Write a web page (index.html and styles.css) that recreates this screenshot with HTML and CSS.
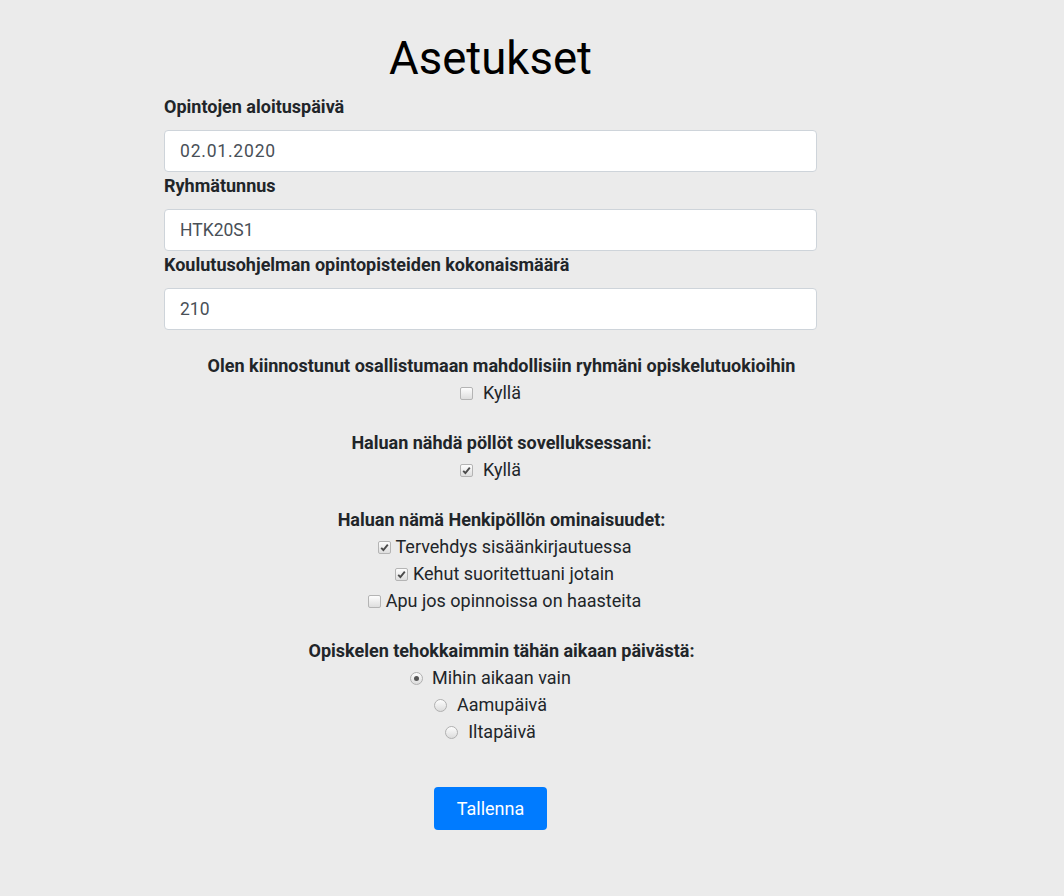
FILE: index.html
```html
<!DOCTYPE html>
<html lang="fi">
<head>
<meta charset="utf-8">
<title>Asetukset</title>
<link rel="stylesheet" href="styles.css">
</head>
<body>
<main class="page">
  <h1 class="title">Asetukset</h1>
  <form class="form">
    <label class="field-label" for="start">Opintojen aloituspäivä</label>
    <input class="field date" id="start" type="text" value="02.01.2020">
    <label class="field-label" for="group">Ryhmätunnus</label>
    <input class="field" id="group" type="text" value="HTK20S1">
    <label class="field-label" for="credits">Koulutusohjelman opintopisteiden kokonaismäärä</label>
    <input class="field" id="credits" type="text" value="210">

    <section class="group">
      <div class="heading">Olen kiinnostunut osallistumaan mahdollisiin ryhmäni opiskelutuokioihin</div>
      <div class="row gap-wide"><span class="box"></span><span>Kyllä</span></div>
    </section>

    <section class="group">
      <div class="heading">Haluan nähdä pöllöt sovelluksessani:</div>
      <div class="row gap-wide"><span class="box checked"><svg viewBox="0 0 13 13" width="13" height="13"><path d="M3.2 6.8 L5.4 9 L9.8 3.6" fill="none" stroke="#4b4b4b" stroke-width="1.9"/></svg></span><span>Kyllä</span></div>
    </section>

    <section class="group">
      <div class="heading">Haluan nämä Henkipöllön ominaisuudet:</div>
      <div class="row shift gap-narrow"><span class="box checked"><svg viewBox="0 0 13 13" width="13" height="13"><path d="M3.2 6.8 L5.4 9 L9.8 3.6" fill="none" stroke="#4b4b4b" stroke-width="1.9"/></svg></span><span>Tervehdys sisäänkirjautuessa</span></div>
      <div class="row shift gap-narrow"><span class="box checked"><svg viewBox="0 0 13 13" width="13" height="13"><path d="M3.2 6.8 L5.4 9 L9.8 3.6" fill="none" stroke="#4b4b4b" stroke-width="1.9"/></svg></span><span>Kehut suoritettuani jotain</span></div>
      <div class="row shift gap-narrow"><span class="box"></span><span>Apu jos opinnoissa on haasteita</span></div>
    </section>

    <section class="group">
      <div class="heading">Opiskelen tehokkaimmin tähän aikaan päivästä:</div>
      <div class="row gap-radio"><span class="radio on"></span><span>Mihin aikaan vain</span></div>
      <div class="row gap-wide"><span class="radio"></span><span>Aamupäivä</span></div>
      <div class="row gap-wide"><span class="radio"></span><span>Iltapäivä</span></div>
    </section>

    <div class="actions">
      <button class="save" type="button">Tallenna</button>
    </div>
  </form>
</main>
</body>
</html>
```
FILE: styles.css
```css
html, body {
  margin: 0;
  padding: 0;
  background: #ebebeb;
}
body {
  font-family: Roboto, "Liberation Sans", Arial, sans-serif;
  color: #212529;
  height: 896px;
}
.page {
  width: 653px;
  margin-left: 164px;
  padding-top: 32px;
}
.title {
  margin: 0 0 9px;
  font-size: 45.5px;
  font-weight: 400;
  line-height: 54px;
  text-align: center;
  color: #000;
}
.form {
  display: flex;
  flex-direction: column;
}
.field-label {
  font-size: 18px;
  font-weight: 700;
  line-height: 24px;
  margin-bottom: 11px;
}
.field {
  box-sizing: border-box;
  height: 42px;
  margin: 0 0 2px;
  padding: 0 15px;
  border: 1px solid #ced4da;
  border-radius: 4px;
  background: #fff;
  font-family: inherit;
  font-size: 17.5px;
  color: #495057;
  outline: none;
}
.date {
  letter-spacing: 0.8px;
}
.group {
  display: flex;
  flex-direction: column;
  align-items: center;
  margin-bottom: 24px;
}
.form .field + .group {
  margin-top: 21px;
}
.heading {
  font-size: 18px;
  font-weight: 700;
  line-height: 26px;
  padding-left: 22px;
  white-space: nowrap;
}
.row {
  display: flex;
  align-items: center;
  font-size: 18px;
  line-height: 27px;
  white-space: nowrap;
}
.row.shift {
  padding-left: 28px;
}
.gap-wide { gap: 10px; }
.gap-narrow { gap: 5px; }
.gap-radio { gap: 9px; }
.box {
  box-sizing: border-box;
  display: block;
  width: 13px;
  height: 13px;
  border: 1px solid #b4b4b4;
  border-radius: 2px;
  background: linear-gradient(#fdfdfd, #dedede);
  position: relative;
  top: 1px;
}
.box svg {
  display: block;
  margin: -1px 0 0 -1px;
}
.radio {
  box-sizing: border-box;
  display: block;
  width: 13px;
  height: 13px;
  border: 1px solid #b0b0b0;
  border-radius: 50%;
  background: linear-gradient(#fdfdfd, #dcdcdc);
  position: relative;
  top: 1px;
}
.radio.on::after {
  content: "";
  position: absolute;
  left: 3px;
  top: 3px;
  width: 5px;
  height: 5px;
  border-radius: 50%;
  background: #555;
}
.actions {
  display: flex;
  justify-content: center;
  margin-top: 17.5px;
}
.save {
  width: 113px;
  height: 43px;
  border: 0;
  border-radius: 4px;
  background: #007bff;
  color: #fff;
  font-family: inherit;
  font-size: 18px;
  cursor: pointer;
}
```
